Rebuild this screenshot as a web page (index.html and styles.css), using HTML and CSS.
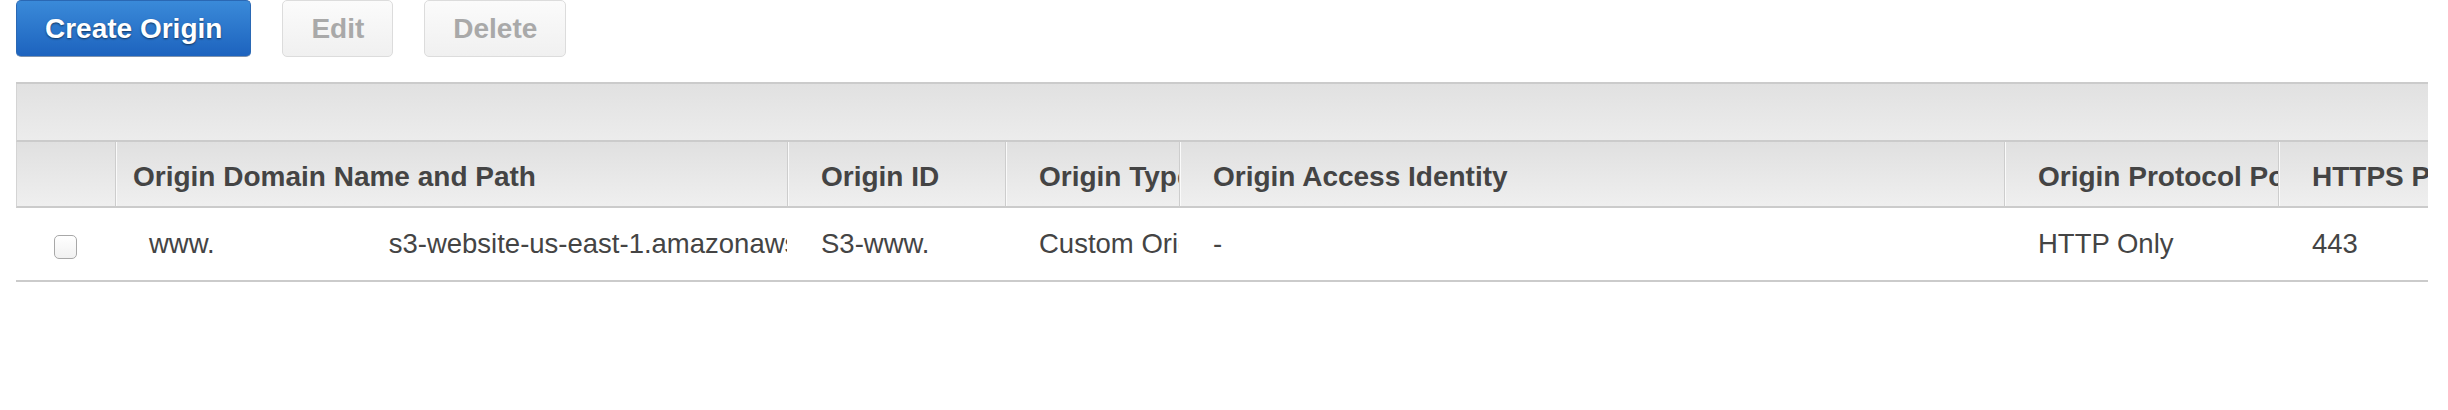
FILE: index.html
```html
<!DOCTYPE html>
<html lang="en">
<head>
<meta charset="utf-8">
<title>Origins</title>
<link rel="stylesheet" href="styles.css">
</head>
<body>
<div class="page">
  <div class="actions">
    <button class="btn btn-primary" type="button">Create Origin</button>
    <button class="btn btn-disabled" type="button" disabled>Edit</button>
    <button class="btn btn-disabled" type="button" disabled>Delete</button>
  </div>

  <div class="grid">
    <div class="grid-toolbar"></div>
    <table class="origins">
      <colgroup>
        <col class="c-check">
        <col class="c-domain">
        <col class="c-id">
        <col class="c-type">
        <col class="c-oai">
        <col class="c-proto">
        <col class="c-https">
      </colgroup>
      <thead>
        <tr>
          <th class="th-check"></th>
          <th class="th-first">Origin Domain Name and Path</th>
          <th>Origin ID</th>
          <th>Origin Type</th>
          <th>Origin Access Identity</th>
          <th>Origin Protocol Policy</th>
          <th>HTTPS Port</th>
        </tr>
      </thead>
      <tbody>
        <tr>
          <td class="td-check"><input class="check" type="checkbox" aria-label="Select origin"></td>
          <td>www.<span class="redacted"></span>s3-website-us-east-1.amazonaws.com</td>
          <td>S3-www.</td>
          <td>Custom Origin</td>
          <td>-</td>
          <td>HTTP Only</td>
          <td>443</td>
        </tr>
      </tbody>
    </table>
  </div>
</div>
</body>
</html>
```

FILE: styles.css
```css
html, body {
  margin: 0;
  padding: 0;
  background: #ffffff;
}

body {
  font-family: "Liberation Sans", Arial, Helvetica, sans-serif;
  color: #444444;
}

.page {
  padding: 0 20px 0 16px;
}

.actions {
  display: flex;
  gap: 31px;
  height: 57px;
}

.btn {
  height: 57px;
  padding: 0 28px;
  font-family: "Liberation Sans", Arial, Helvetica, sans-serif;
  font-size: 28px;
  font-weight: bold;
  border-radius: 5px;
  line-height: 1;
  cursor: pointer;
}

.btn-primary {
  color: #ffffff;
  background: linear-gradient(#3a8ad9, #1d63be);
  border: 1px solid #2a68b4;
  border-bottom-color: #7f93ad;
  text-shadow: 0 1px 2px rgba(0, 0, 0, 0.55);
}

.btn-disabled {
  color: #a9a9a9;
  background: linear-gradient(#fbfbfb, #f0f0f0);
  border: 1px solid #dcdcdc;
  cursor: default;
}

.grid {
  margin-top: 25px;
  border-top: 2px solid #cbcbcb;
}

.grid-toolbar {
  height: 56px;
  background: linear-gradient(#e1e1e1, #ececec);
  border-bottom: 2px solid #cbcbcb;
  border-left: 1px solid #d4d4d4;
}

.origins {
  width: 2412px;
  table-layout: fixed;
  border-collapse: separate;
  border-spacing: 0;
  font-size: 27.5px;
}

.c-check { width: 99px; }
.c-domain { width: 672px; }
.c-id { width: 218px; }
.c-type { width: 174px; }
.c-oai { width: 825px; }
.c-proto { width: 274px; }
.c-https { width: 150px; }

.origins th,
.origins td {
  white-space: nowrap;
  overflow: hidden;
  text-align: left;
  vertical-align: middle;
}

.origins th {
  height: 66px;
  box-sizing: border-box;
  padding: 6px 0 0 33px;
  font-size: 28px;
  font-weight: bold;
  color: #444444;
  background: linear-gradient(#e0e0e0, #efefef);
  border-left: 1px solid #cdcdcd;
  border-bottom: 2px solid #cbcbcb;
  box-shadow: inset 1px 0 0 #fafafa;
}

.origins th.th-check {
  padding: 0;
  border-left: 1px solid #d4d4d4;
  box-shadow: none;
}

.origins th.th-first {
  padding-left: 17px;
}

.origins td {
  height: 72px;
  padding: 0 0 0 34px;
  color: #444444;
  border-bottom: 2px solid #cbcbcb;
}

.origins td.td-check {
  padding: 0;
  text-align: center;
}

.redacted {
  display: inline-block;
  width: 174px;
}

.check {
  appearance: none;
  -webkit-appearance: none;
  width: 23px;
  height: 24px;
  margin: 3px 0 0 0;
  border: 1px solid #a8a8a8;
  border-radius: 5px;
  background: linear-gradient(#ffffff, #f1f1f1);
  vertical-align: middle;
}
```
